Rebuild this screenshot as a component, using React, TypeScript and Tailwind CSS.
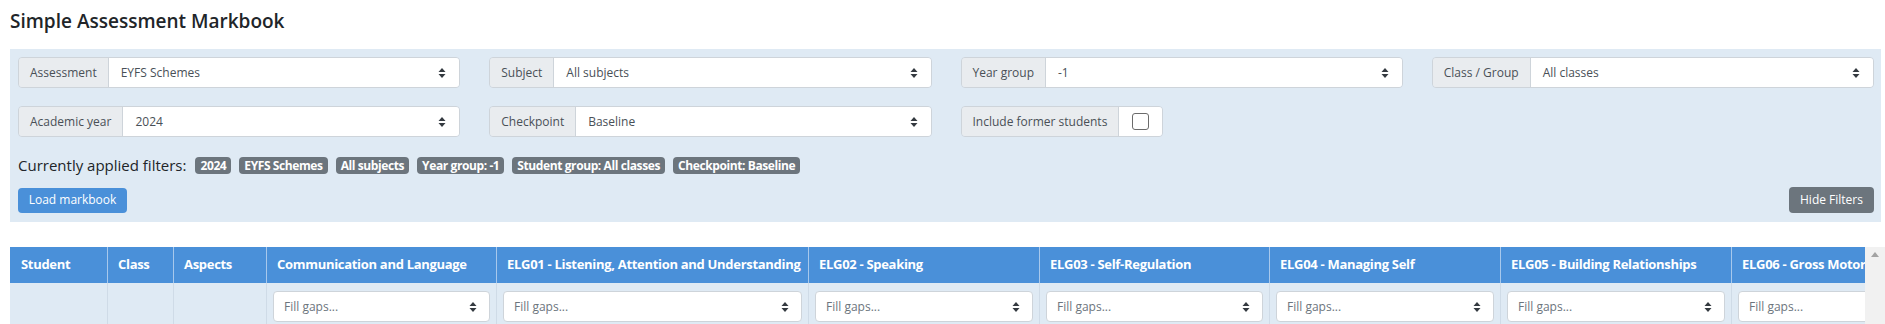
import React from "react";

const FONT = { fontFamily: '"Open Sans", "Noto Sans", "Liberation Sans", sans-serif' };

function Caret({ className = "" }: { className?: string }) {
  return (
    <svg width="8" height="12" viewBox="0 0 8 12" className={className}>
      <path d="M4 1 L7.5 5 L0.5 5 Z" fill="#343a40" />
      <path d="M4 11 L7.5 7 L0.5 7 Z" fill="#343a40" />
    </svg>
  );
}

function SelectGroup({ label, value }: { label: string; value: string }) {
  return (
    <div className="flex h-[31px] rounded-[4px] border border-[#ced4da] overflow-hidden">
      <div className="flex items-center px-[11px] bg-[#e9ecef] border-r border-[#ced4da] text-[12px] text-[#495057] whitespace-nowrap">
        {label}
      </div>
      <div className="flex flex-1 items-center justify-between bg-white pl-[12px] pr-[13px] text-[12px] text-[#495057]">
        <span>{value}</span>
        <Caret />
      </div>
    </div>
  );
}

function CheckGroup({ label }: { label: string }) {
  return (
    <div className="flex h-[31px] w-fit rounded-[4px] border border-[#ced4da] overflow-hidden">
      <div className="flex items-center px-[11px] bg-[#e9ecef] border-r border-[#ced4da] text-[12px] text-[#495057] whitespace-nowrap">
        {label}
      </div>
      <div className="flex items-center bg-white px-[13px]">
        <div className="w-[17px] h-[17px] rounded-[3px] border border-[#6b6b6b] bg-white" />
      </div>
    </div>
  );
}

const badges = [
  "2024",
  "EYFS Schemes",
  "All subjects",
  "Year group: -1",
  "Student group: All classes",
  "Checkpoint: Baseline",
];

const columns: { title: string; w: number; fill: boolean }[] = [
  { title: "Student", w: 97, fill: false },
  { title: "Class", w: 66, fill: false },
  { title: "Aspects", w: 93, fill: false },
  { title: "Communication and Language", w: 230, fill: true },
  { title: "ELG01 - Listening, Attention and Understanding", w: 312, fill: true },
  { title: "ELG02 - Speaking", w: 231, fill: true },
  { title: "ELG03 - Self-Regulation", w: 230, fill: true },
  { title: "ELG04 - Managing Self", w: 231, fill: true },
  { title: "ELG05 - Building Relationships", w: 231, fill: true },
  { title: "ELG06 - Gross Motor Skills", w: 231, fill: true },
];

export default function App() {
  return (
    <div style={FONT} className="w-[1885px] h-[324px] overflow-hidden bg-white text-[#212529]">
      <div className="h-[49px] pl-[10px] pt-[7px]">
        <h1 className="text-[19px] leading-[28px] font-semibold text-[#212529]">Simple Assessment Markbook</h1>
      </div>

      <div className="ml-[10px] mr-[4px] bg-[#dfeaf4] pt-[8px] pl-[8px] pr-[7px] pb-[9px]">
        <div className="grid grid-cols-4 gap-x-[29px] gap-y-[18px]">
          <SelectGroup label="Assessment" value="EYFS Schemes" />
          <SelectGroup label="Subject" value="All subjects" />
          <SelectGroup label="Year group" value="-1" />
          <SelectGroup label="Class / Group" value="All classes" />
          <SelectGroup label="Academic year" value="2024" />
          <SelectGroup label="Checkpoint" value="Baseline" />
          <CheckGroup label="Include former students" />
        </div>

        <div className="flex items-center mt-[20px] h-[17px]">
          <span className="text-[15px] text-[#212529] mr-[9px] whitespace-nowrap">Currently applied filters:</span>
          <div className="flex gap-[8px]">
            {badges.map((b) => (
              <span
                key={b}
                className="h-[17px] flex items-center px-[5px] rounded-[4px] bg-[#6c757d] text-white text-[12px] font-bold tracking-[-0.4px] whitespace-nowrap"
              >
                {b}
              </span>
            ))}
          </div>
        </div>

        <div className="flex items-center justify-between mt-[13px]">
          <button className="h-[25px] w-[109px] rounded-[4px] bg-[#4a90d9] text-white text-[12px]">Load markbook</button>
          <button className="h-[26px] w-[85px] rounded-[4px] bg-[#6c757d] text-white text-[12px]">Hide Filters</button>
        </div>
      </div>

      <div className="flex mt-[25px] pl-[10px]">
        <div className="w-[1855px] overflow-hidden">
          <table className="table-fixed border-collapse" style={{ width: columns.reduce((s, c) => s + c.w, 0) }}>
            <colgroup>
              {columns.map((c) => (
                <col key={c.title} style={{ width: c.w }} />
              ))}
            </colgroup>
            <thead>
              <tr className="h-[36px] bg-[#4a90d9]">
                {columns.map((c) => (
                  <th
                    key={c.title}
                    className="px-[10px] text-left text-white text-[13px] font-bold tracking-[-0.3px] whitespace-nowrap overflow-hidden border-l border-[#a7c8ec] first:border-l-[#4a90d9]"
                  >
                    {c.title}
                  </th>
                ))}
              </tr>
            </thead>
            <tbody>
              <tr className="bg-[#dfeaf4]">
                {columns.map((c) => (
                  <td key={c.title} className="px-[6px] pt-[8px] pb-[8px] border-l border-[#cfdbe7] first:border-l-[#dfeaf4]">
                    {c.fill ? (
                      <div className="flex h-[31px] items-center justify-between rounded-[4px] border border-[#ced4da] bg-white pl-[10px] pr-[12px] text-[12px] text-[#6c757d]">
                        <span>Fill gaps...</span>
                        <Caret />
                      </div>
                    ) : (
                      <div className="h-[31px]" />
                    )}
                  </td>
                ))}
              </tr>
            </tbody>
          </table>
        </div>
        <div className="w-[20px] h-[80px] bg-[#f1f1f1] flex justify-center pt-[5px]">
          <svg width="8" height="5" viewBox="0 0 8 5">
            <path d="M4 0 L8 5 L0 5 Z" fill="#a3a3a3" />
          </svg>
        </div>
      </div>
    </div>
  );
}
